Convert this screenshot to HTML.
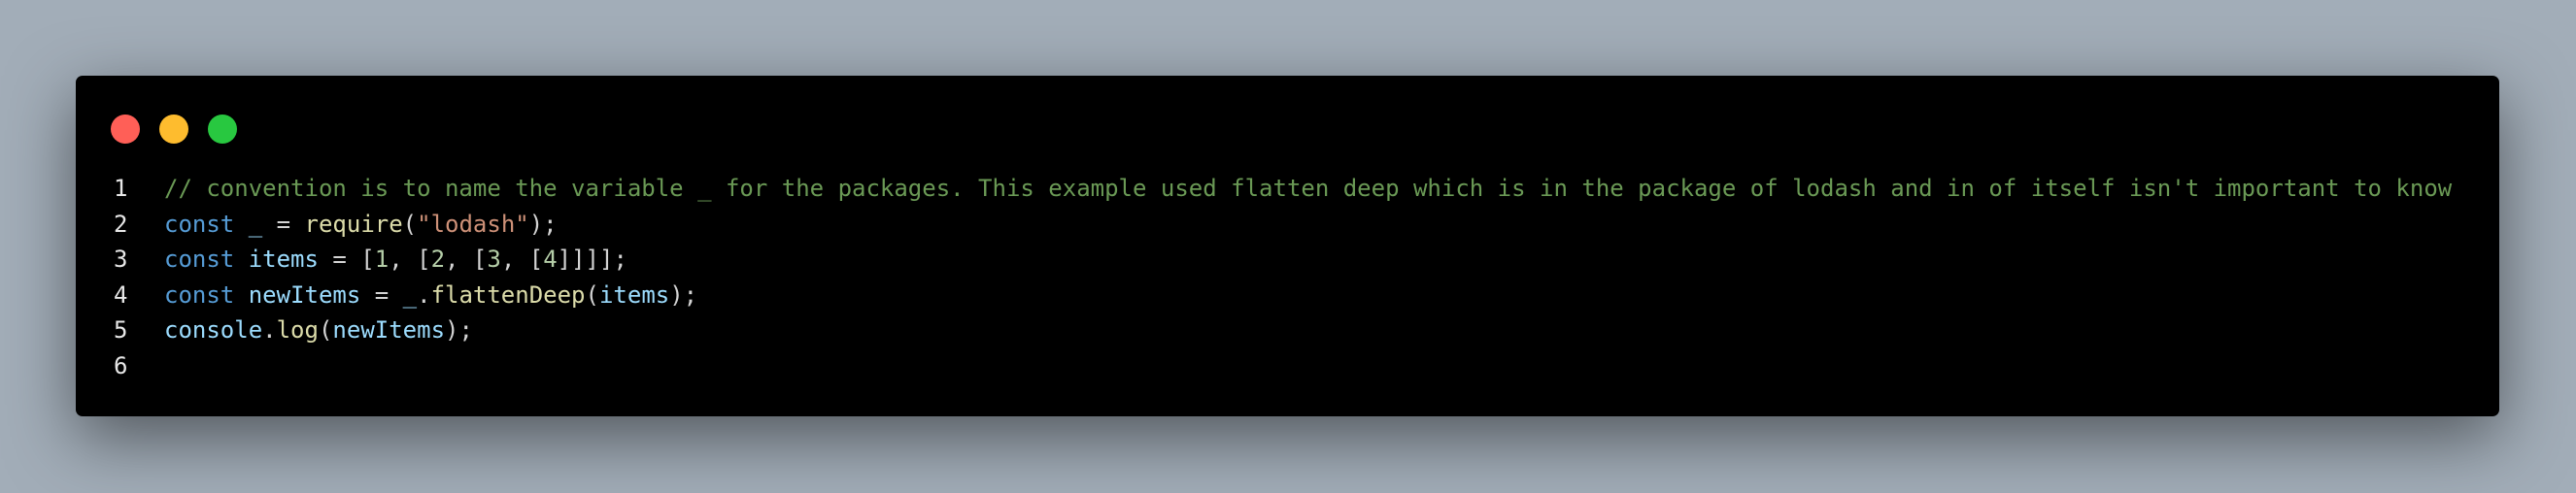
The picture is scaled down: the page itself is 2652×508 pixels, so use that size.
<!DOCTYPE html>
<html><head><meta charset="utf-8"><style>
html,body{margin:0;padding:0;width:2652px;height:508px;overflow:hidden;background:#a2adb8;}
.win{position:absolute;left:78px;top:78px;width:2495px;height:351px;background:#000;border-radius:7px;box-shadow:0 22px 70px rgba(0,0,0,0.5);}
.dot{position:absolute;top:118px;width:30px;height:30px;border-radius:50%;}
pre{position:absolute;left:0;top:176px;margin:0;font-family:"DejaVu Sans Mono","Liberation Mono",monospace;font-size:24px;line-height:36.5px;color:#d4d4d4;}
.ln{position:absolute;left:117px;width:30px;color:#e8e8e8;}
.code{position:absolute;left:169px;white-space:pre;}
.c{color:#6a9955}.k{color:#569cd6}.v{color:#9cdcfe}.f{color:#dcdcaa}.s{color:#ce9178}.n{color:#b5cea8}
</style></head><body>
<div class="win"></div>
<div class="dot" style="left:114px;background:#ff5f57"></div>
<div class="dot" style="left:164px;background:#febc2e"></div>
<div class="dot" style="left:214px;background:#28c840"></div>
<pre><span class="ln">1
2
3
4
5
6</span><span class="code"><span class="c">// convention is to name the variable _ for the packages. This example used flatten deep which is in the package of lodash and in of itself isn't important to know</span>
<span class="k">const</span> <span class="v">_</span> = <span class="f">require</span>(<span class="s">"lodash"</span>);
<span class="k">const</span> <span class="v">items</span> = [<span class="n">1</span>, [<span class="n">2</span>, [<span class="n">3</span>, [<span class="n">4</span>]]]];
<span class="k">const</span> <span class="v">newItems</span> = <span class="v">_</span>.<span class="f">flattenDeep</span>(<span class="v">items</span>);
<span class="v">console</span>.<span class="f">log</span>(<span class="v">newItems</span>);
</span></pre>
</body></html>
